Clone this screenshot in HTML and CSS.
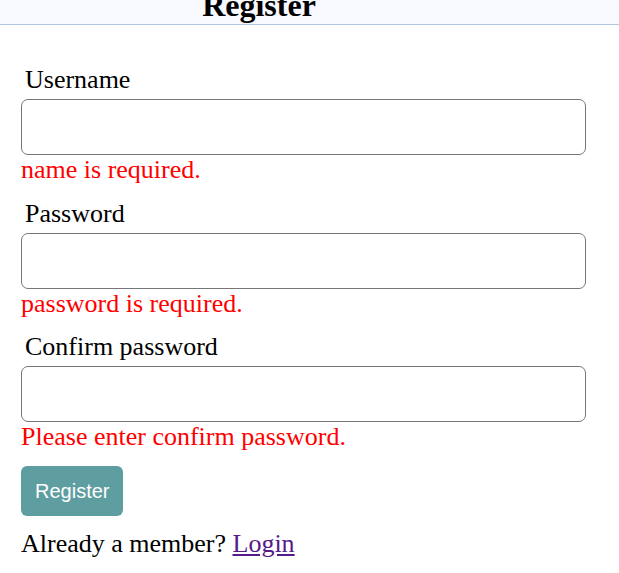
FILE: index.html
```html
<!DOCTYPE html>
<html>
<head>
<meta charset="utf-8">
<link rel="stylesheet" href="styles.css">
</head>
<body>
<header class="topbar">
  <h1 class="title">Register</h1>
</header>
<main class="form-wrap">
  <form class="form">
    <div class="field">
      <label class="label">Username</label>
      <input class="input" type="text">
      <div class="error">name is required.</div>
    </div>
    <div class="field">
      <label class="label">Password</label>
      <input class="input" type="password">
      <div class="error">password is required.</div>
    </div>
    <div class="field">
      <label class="label">Confirm password</label>
      <input class="input" type="password">
      <div class="error">Please enter confirm password.</div>
    </div>
    <button class="btn" type="button">Register</button>
    <p class="member">Already a member? <a class="link" href="#">Login</a></p>
  </form>
</main>
</body>
</html>
```
FILE: styles.css
```css
html, body {
  margin: 0;
  padding: 0;
  background: #ffffff;
}
body {
  font-family: "Liberation Serif", "Times New Roman", serif;
  color: #000;
}
.topbar {
  height: 24px;
  overflow: hidden;
  background: #f8f9fe;
  border-bottom: 1px solid #b0c4dc;
  text-align: center;
  padding-right: 101px;
}
.title {
  margin: -13px 0 0 0;
  font-size: 32px;
  line-height: 37px;
  font-weight: bold;
}
.form-wrap {
  padding: 40px 33px 0 21px;
}
.form {
  display: flex;
  flex-direction: column;
}
.field {
  display: flex;
  flex-direction: column;
  margin-bottom: 13.5px;
}
.label {
  font-size: 26px;
  line-height: 30px;
  padding-left: 4px;
  margin-bottom: 4px;
}
.input {
  box-sizing: border-box;
  height: 56px;
  width: 100%;
  border: 1px solid #767676;
  border-radius: 7px;
  margin: 0;
  background: #fff;
}
.error {
  color: #ff0000;
  font-size: 26px;
  line-height: 30px;
}
.btn {
  align-self: flex-start;
  height: 50px;
  padding: 0 14px;
  border: none;
  border-radius: 6px;
  background: #5f9ea0;
  color: #fff;
  font-family: "Liberation Sans", Arial, sans-serif;
  font-size: 20px;
  margin-top: 0.5px;
}
.member {
  margin: 13px 0 0 0;
  font-size: 26px;
  line-height: 30px;
}
.link {
  color: #551a8b;
}
```
